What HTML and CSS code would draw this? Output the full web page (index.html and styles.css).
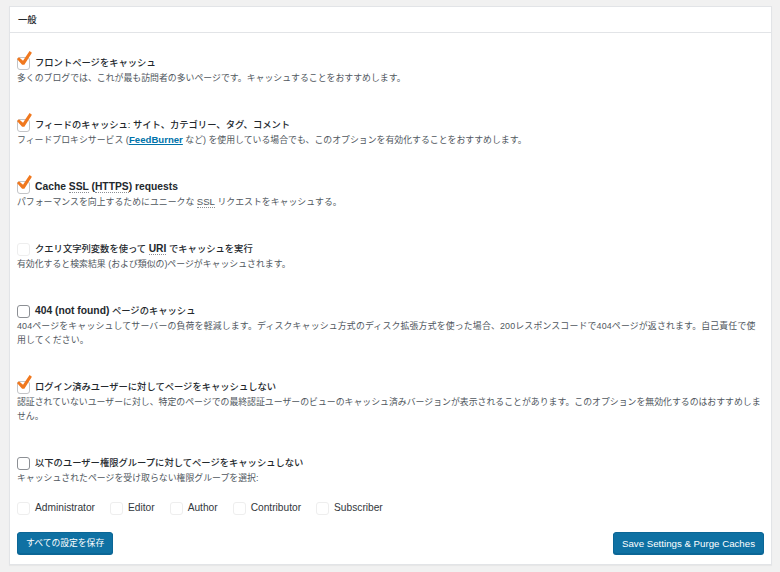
FILE: index.html
```html
<!DOCTYPE html>
<html lang="ja">
<head>
<meta charset="utf-8">
<title>一般</title>
<link rel="stylesheet" href="styles.css">
</head>
<body>
<div class="page">
  <section class="panel">
    <h2 class="panel-title">一般</h2>
    <div class="panel-body">
      <div class="opt">
        <div class="opt-label"><span class="cb checked"><svg class="tick" viewBox="0 0 20 20"><path d="M16.2 1.2l2.6 1.8-8.4 13.4H7.9L2.2 10.1l2.2-2.1 4.5 4z"/></svg></span><span>フロントページをキャッシュ</span></div>
        <p class="desc">多くのブログでは、これが最も訪問者の多いページです。キャッシュすることをおすすめします。</p>
      </div>
      <div class="opt">
        <div class="opt-label"><span class="cb checked"><svg class="tick" viewBox="0 0 20 20"><path d="M16.2 1.2l2.6 1.8-8.4 13.4H7.9L2.2 10.1l2.2-2.1 4.5 4z"/></svg></span><span>フィードのキャッシュ: サイト、カテゴリー、タグ、コメント</span></div>
        <p class="desc">フィードプロキシサービス <span class="en">(<a class="link" href="#">FeedBurner</a></span> など) を使用している場合でも、このオプションを有効化することをおすすめします。</p>
      </div>
      <div class="opt">
        <div class="opt-label"><span class="cb checked"><svg class="tick" viewBox="0 0 20 20"><path d="M16.2 1.2l2.6 1.8-8.4 13.4H7.9L2.2 10.1l2.2-2.1 4.5 4z"/></svg></span><span class="en">Cache <abbr>SSL</abbr> (<abbr>HTTPS</abbr>) requests</span></div>
        <p class="desc">パフォーマンスを向上するためにユニークな <abbr class="en">SSL</abbr> リクエストをキャッシュする。</p>
      </div>
      <div class="opt">
        <div class="opt-label"><span class="cb disabled"></span><span>クエリ文字列変数を使って <abbr class="en">URI</abbr> でキャッシュを実行</span></div>
        <p class="desc">有効化すると検索結果 (および類似の)ページがキャッシュされます。</p>
      </div>
      <div class="opt">
        <div class="opt-label"><span class="cb"></span><span><span class="en">404 (not found)</span> ページのキャッシュ</span></div>
        <p class="desc desc-wide">404ページをキャッシュしてサーバーの負荷を軽減します。ディスクキャッシュ方式のディスク拡張方式を使った場合、200レスポンスコードで404ページが返されます。自己責任で使用してください。</p>
      </div>
      <div class="opt">
        <div class="opt-label"><span class="cb checked"><svg class="tick" viewBox="0 0 20 20"><path d="M16.2 1.2l2.6 1.8-8.4 13.4H7.9L2.2 10.1l2.2-2.1 4.5 4z"/></svg></span><span>ログイン済みユーザーに対してページをキャッシュしない</span></div>
        <p class="desc">認証されていないユーザーに対し、特定のページでの最終認証ユーザーのビューのキャッシュ済みバージョンが表示されることがあります。このオプションを無効化するのはおすすめしません。</p>
      </div>
      <div class="opt last">
        <div class="opt-label"><span class="cb"></span><span>以下のユーザー権限グループに対してページをキャッシュしない</span></div>
        <p class="desc">キャッシュされたページを受け取らない権限グループを選択:</p>
      </div>
      <div class="roles">
        <label class="role"><span class="cb disabled"></span>Administrator</label>
        <label class="role"><span class="cb disabled"></span>Editor</label>
        <label class="role"><span class="cb disabled"></span>Author</label>
        <label class="role"><span class="cb disabled"></span>Contributor</label>
        <label class="role"><span class="cb disabled"></span>Subscriber</label>
      </div>
      <div class="actions">
        <button class="btn">すべての設定を保存</button>
        <button class="btn btn-en">Save Settings &amp; Purge Caches</button>
      </div>
    </div>
  </section>
</div>
</body>
</html>
```

FILE: styles.css
```css
html, body {
  margin: 0;
  padding: 0;
  background: #f1f1f1;
}
body {
  font-family: "Liberation Sans", "Noto Sans CJK JP", sans-serif;
  color: #23282d;
}
.page {
  padding: 6px 8px 7px 9px;
}
.panel {
  background: #fff;
  border: 1px solid #e2e4e7;
  box-shadow: 0 1px 1px rgba(0,0,0,0.04);
}
.panel-title {
  margin: 0;
  font-size: 9.3px;
  font-weight: 500;
  line-height: 12px;
  padding: 7px 8px 6px;
  border-bottom: 1px solid #e2e4e7;
}
.panel-body {
  padding: 22px 7px 10px 7px;
}
.opt {
  margin-bottom: 32px;
}
.opt.last {
  margin-bottom: 15px;
}
.opt-label {
  display: flex;
  align-items: center;
  gap: 5px;
  font-size: 9.3px;
  font-weight: 500;
  line-height: 16px;
}
.opt-label .en {
  font-size: 10.3px;
  font-weight: 600;
}
.desc {
  margin: 0;
  font-size: 8.9px;
  line-height: 14px;
  color: #50575e;
}
.desc-wide {
  letter-spacing: 0.17px;
}
.desc .en {
  font-size: 9.6px;
}
abbr {
  text-decoration: none;
  border-bottom: 1px dotted #8c8f94;
}
.link {
  color: #0073aa;
  font-weight: 600;
  text-decoration: underline;
}
.cb {
  position: relative;
  flex: none;
  box-sizing: border-box;
  width: 13px;
  height: 13px;
  border: 1px solid #8c8f94;
  border-radius: 3px;
  background: #fff;
}
.cb.checked {
  border-color: #c3c4c7;
}
.cb.disabled {
  border-color: #eeeeee;
}
.tick {
  position: absolute;
  left: -3px;
  top: -8px;
  width: 18px;
  height: 18px;
  fill: #f0781e;
}
.roles {
  display: flex;
  align-items: center;
  gap: 15px;
  font-size: 10.2px;
  line-height: 16px;
  color: #32373c;
}
.role {
  display: flex;
  align-items: center;
  gap: 5px;
}
.actions {
  display: flex;
  justify-content: space-between;
  margin-top: 16px;
}
.btn {
  font-family: "Liberation Sans", "Noto Sans CJK JP", sans-serif;
  font-size: 8.8px;
  line-height: 19px;
  height: 22px;
  padding: 0 8px;
  color: #fff;
  background: #0f71a3;
  border: 1px solid #0b6696;
  border-radius: 3px;
  box-shadow: 0 1px 0 #0b6696;
}
.btn-en {
  font-size: 9.7px;
}
```
